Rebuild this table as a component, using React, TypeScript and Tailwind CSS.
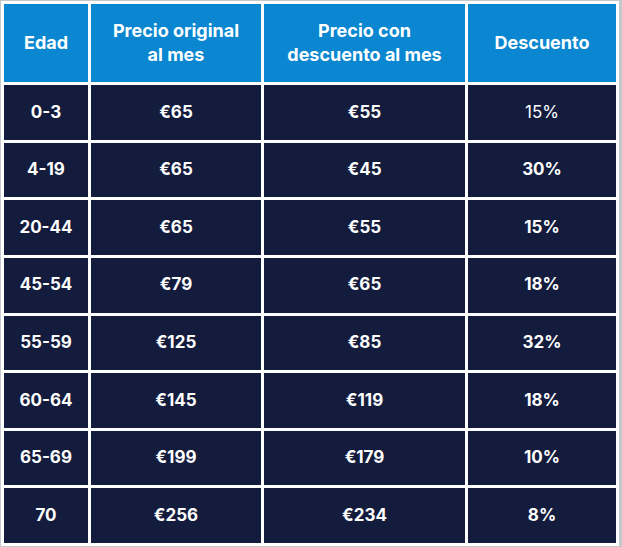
import React from "react";

interface Row {
  edad: string;
  original: string;
  descuento: string;
  pct: string;
}

const rows: Row[] = [
  { edad: "0-3", original: "€65", descuento: "€55", pct: "15%" },
  { edad: "4-19", original: "€65", descuento: "€45", pct: "30%" },
  { edad: "20-44", original: "€65", descuento: "€55", pct: "15%" },
  { edad: "45-54", original: "€79", descuento: "€65", pct: "18%" },
  { edad: "55-59", original: "€125", descuento: "€85", pct: "32%" },
  { edad: "60-64", original: "€145", descuento: "€119", pct: "18%" },
  { edad: "65-69", original: "€199", descuento: "€179", pct: "10%" },
  { edad: "70", original: "€256", descuento: "€234", pct: "8%" },
];

const headers = ["Edad", "Precio original\nal mes", "Precio con\ndescuento al mes", "Descuento"];

const App: React.FC = () => {
  return (
    <div
      className="w-[622px] h-[547px] bg-[#c4c7cc] pt-px pl-px"
      style={{ fontFamily: "Inter, 'Liberation Sans', sans-serif" }}
    >
      <div className="w-[618px] h-[545px] bg-white p-[3px] grid grid-cols-[84px_170px_201px_148px] grid-rows-[78px_repeat(8,1fr)] gap-[3px]">
        {/* Header */}
        {headers.map((h) => (
          <div
            key={h}
            className="bg-[#0a87d0] text-white font-bold text-[18px] leading-[24px] flex items-center justify-center text-center whitespace-pre-line"
          >
            {h}
          </div>
        ))}

        {/* Rows */}
        {rows.map((r, i) => (
          <React.Fragment key={r.edad}>
            <div className="bg-[#141c3d] text-white font-bold text-[17px] flex items-center justify-center">
              {r.edad}
            </div>
            <div className="bg-[#141c3d] text-white font-bold text-[17px] flex items-center justify-center">
              {r.original}
            </div>
            <div className="bg-[#141c3d] text-white font-bold text-[17px] flex items-center justify-center">
              {r.descuento}
            </div>
            <div
              className={`bg-[#141c3d] text-white text-[17px] flex items-center justify-center ${
                i === 0 ? "font-normal" : "font-bold"
              }`}
            >
              {r.pct}
            </div>
          </React.Fragment>
        ))}
      </div>
    </div>
  );
};

export default App;
